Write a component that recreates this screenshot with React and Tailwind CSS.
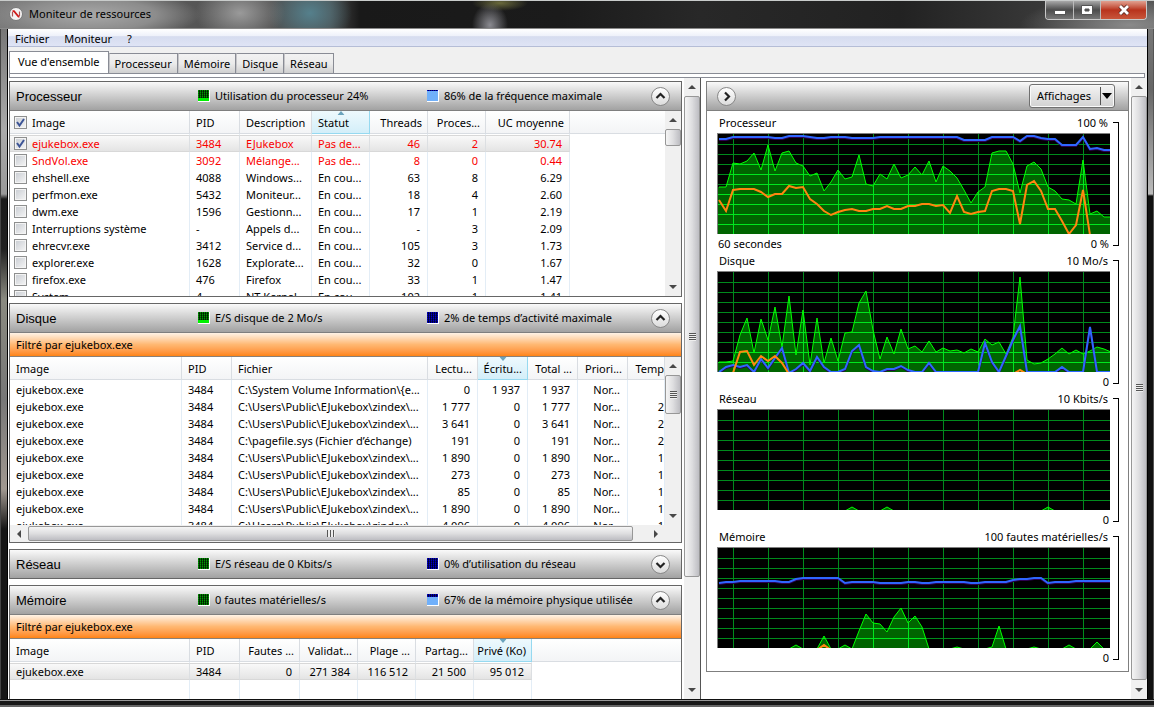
import React from 'react';

const STEP = 7;

const CHARTS = [
  {
    title: 'Processeur', max: '100 %', start: '60 secondes', min: '0 %',
    area: [53,53,29,30,27,19,36,11,37,19,17,29,32,42,39,57,48,36,45,43,21,50,52,40,45,30,44,41,33,41,27,48,32,37,44,56,69,58,53,19,17,17,30,59,32,28,35,53,57,65,66,70,26,80,77,83,83],
    orange: [66,77,56,55,55,55,58,63,60,60,52,54,53,65,70,77,81,78,76,75,77,77,75,75,72,75,75,72,72,70,70,72,71,79,62,78,80,78,77,57,55,55,57,90,51,47,57,75,75,87,100,91,56,101,101,101,101],
    blue: [5,5,3,3,3,3,3,3,4,4,2,2,2,3,4,4,3,3,3,4,4,4,4,3,3,3,3,3,3,3,3,3,3,3,3,6,6,6,6,3,3,3,3,7,2,2,4,5,5,11,11,11,3,15,14,16,16],
  },
  {
    title: 'Disque', max: '10 Mo/s', start: '', min: '0',
    area: [90,90,89,63,46,81,47,68,35,75,24,83,38,93,46,91,66,89,61,60,31,19,58,87,65,82,57,77,74,80,69,80,76,79,78,81,77,80,67,73,70,82,65,5,88,92,91,87,82,76,82,78,82,79,75,77,80],
    orange: [102,102,101,80,79,93,84,89,84,91,102,102,102,102,102,102,102,102,102,102,102,102,102,102,102,102,102,102,102,102,102,102,102,102,102,102,102,102,102,102,102,102,102,98,102,102,102,102,102,102,102,102,102,102,102,102,102],
    blue: [100,95,93,95,93,100,87,96,86,76,101,97,91,99,85,95,100,100,97,79,73,95,99,100,97,97,94,98,100,100,91,100,100,100,100,100,100,100,71,90,100,84,68,54,100,100,100,100,100,95,100,100,100,55,100,100,100],
  },
  {
    title: 'Réseau', max: '10 Kbits/s', start: '', min: '0',
    area: Array.from({ length: 57 }, (_, i) => ([19, 24, 47].includes(i) ? 97 : 101)),
  },
  {
    title: 'Mémoire', max: '100 fautes matérielles/s', start: '', min: '0',
    area: [101,101,101,101,101,101,101,101,101,101,101,97,101,101,101,88,101,101,97,101,83,66,75,76,84,69,60,75,68,79,101,101,101,101,99,101,101,101,101,99,78,101,101,101,101,99,101,101,101,101,97,101,101,101,94,101,101],
    orange: Array.from({ length: 57 }, (_, i) => (i === 15 ? 97 : 102)),
    blue: [35,34,34,33,33,33,33,33,33,34,34,31,30,30,30,30,30,30,35,34,34,34,34,35,35,35,35,34,34,35,35,34,34,34,34,34,35,35,34,34,34,34,32,31,31,30,30,35,34,34,34,33,33,33,33,33,33],
  },
];

const toPoints = (values) => values.map((y, i) => `${1 + i * STEP},${y}`).join(' ');

function Grid({ color }) {
  const rows = [10, 20, 30, 40, 50, 60, 70, 80, 90];
  const cols = [15, 50, 85, 120, 155, 190, 225, 260, 295, 330, 365];
  return (
    <g stroke={color} strokeWidth="1">
      {rows.map((y) => <line key={y} x1="0" x2="392" y1={y + 0.5} y2={y + 0.5} />)}
      {cols.map((x) => <line key={x} y1="0" y2="100" x1={x + 0.5} x2={x + 0.5} />)}
    </g>
  );
}

function Chart({ chart }) {
  const id = `area-${chart.title}`;
  const area = `0,101 0,${chart.area[0]} ${toPoints(chart.area)} 393,101`;
  return (
    <div className="flex gap-[3px]">
      <div className="min-w-0 flex-1">
        <div className="flex h-[18px] justify-between px-[2px] leading-4">
          <span>{chart.title}</span>
          <span>{chart.max}</span>
        </div>
        <div className="border-t border-l border-[#7f7f7f] bg-black">
          <svg className="block h-[100px] w-full" viewBox="0 0 392 100" preserveAspectRatio="none" role="img" aria-label={chart.title}>
            <defs>
              <clipPath id={id}><polygon points={area} /></clipPath>
            </defs>
            <rect width="392" height="100" fill="#000" />
            <Grid color="#008a1c" />
            <polygon points={area} fill="#006400" />
            <g clipPath={`url(#${id})`}><Grid color="#00e61e" /></g>
            <polyline points={toPoints(chart.area)} fill="none" stroke="#00ff00" />
            {chart.blue && <polyline points={toPoints(chart.blue)} transform="translate(0 1)" fill="none" stroke="#2c0050" strokeWidth="2" />}
            {chart.blue && <polyline points={toPoints(chart.blue)} fill="none" stroke="#2f66ff" strokeWidth="2" />}
            {chart.orange && <polyline points={toPoints(chart.orange)} fill="none" stroke="#ff8610" strokeWidth="2" />}
          </svg>
        </div>
        <div className="flex h-[19px] justify-between px-px leading-[19px]">
          <span>{chart.start}</span>
          <span>{chart.min}</span>
        </div>
      </div>
      <div className="mt-[7px] mb-[7px] w-[6px] border-y border-r border-black" />
    </div>
  );
}

function Arrow({ dir }) {
  const d = { up: 'M0 4 4 0 8 4Z', down: 'M0 0h8L4 4Z', left: 'M4 0v8L0 4Z', right: 'M0 0v8l4-4Z' }[dir];
  const wide = dir === 'up' || dir === 'down';
  return (
    <svg width={wide ? 8 : 4} height={wide ? 4 : 8} aria-hidden="true"><path d={d} fill="#484848" /></svg>
  );
}

const VERTICAL_THUMB = 'flex items-center justify-center rounded-[2px] border border-[#979797] bg-linear-to-r from-[#f5f5f5] via-[#dedee0] to-[#bdbdc2]';

function VScroll({ thumb, rest, grip = true, className = '' }) {
  return (
    <div className={`flex w-4 shrink-0 flex-col bg-[#f0f0f0] ${className}`}>
      <button aria-label="Défiler vers le haut" className="flex h-[18px] shrink-0 items-center justify-center"><Arrow dir="up" /></button>
      <div className={VERTICAL_THUMB} style={{ flex: `${thumb} 1 0px` }}>
        {grip && (
          <div className="h-[8px] w-[7px] bg-[repeating-linear-gradient(to_bottom,#555_0px,#555_1px,#eee_1px,#eee_2px)]" />
        )}
      </div>
      <div style={{ flex: `${rest} 1 0px` }} />
      <button aria-label="Défiler vers le bas" className="flex h-[18px] shrink-0 items-center justify-center"><Arrow dir="down" /></button>
    </div>
  );
}

function HScroll() {
  return (
    <div className="flex h-[17px] bg-[#f0f0f0]">
      <button aria-label="Défiler vers la gauche" className="flex w-[18px] shrink-0 items-center justify-center"><Arrow dir="left" /></button>
      <div className="my-px flex flex-[605] items-center justify-center rounded-[2px] border border-[#979797] bg-linear-to-b from-[#f5f5f5] via-[#dedee0] to-[#bdbdc2]">
        <div className="h-[7px] w-[8px] bg-[repeating-linear-gradient(to_right,#555_0px,#555_1px,#eee_1px,#eee_3px)]" />
      </div>
      <div className="flex-[14]" />
      <button aria-label="Défiler vers la droite" className="flex w-[18px] shrink-0 items-center justify-center"><Arrow dir="right" /></button>
      <div className="w-4 shrink-0" />
    </div>
  );
}

const DOTS = 'bg-[repeating-linear-gradient(to_right,#0000_0px,#0000_1px,#000a_1px,#000a_2px),repeating-linear-gradient(to_bottom,#0000_0px,#0000_1px,#0005_1px,#0005_2px)]';

const METERS = {
  greenPart: ['bg-[#009600]', 'h-[3px] bg-[#00f000]'],
  green: ['bg-[#009600]', 'h-0'],
  blue: ['bg-[#0000c8]', 'h-0'],
  blueHigh: ['bg-[#0000c8]', 'h-[10px] bg-[#70b0fa]'],
  bluePart: ['bg-[#0000c8]', 'h-[8px] bg-[#70b0fa]'],
};

function Meter({ kind, label }) {
  const [base, fill] = METERS[kind];
  return (
    <span className="flex min-w-0 items-center gap-[5px] whitespace-nowrap">
      <span className={`flex size-3 shrink-0 flex-col border-r border-b border-white ${base}`}>
        <span className={`block flex-1 ${DOTS}`} />
        <span className={`block ${fill}`} />
      </span>
      <span>{label}</span>
    </span>
  );
}

function RoundButton({ dir, label }) {
  const d = { up: 'M5.5 11 9.5 7l4 4', down: 'M5.5 8 9.5 12l4-4', right: 'M8 5.5l4 4-4 4' }[dir];
  return (
    <button aria-label={label} className="flex size-[19px] items-center justify-center rounded-full border border-[#888] bg-linear-to-b from-white to-[#dcdcdc]">
      <svg className="shrink-0" width="19" height="19" aria-hidden="true"><path d={d} fill="none" stroke="#222" strokeWidth="2.2" /></svg>
    </button>
  );
}

const BAR = 'h-[29px] border-b border-[#7f7f7f] bg-linear-to-b from-[#fafafa] to-[#a2a2a2]';

function Panel({ title, first, second, open = true, filter, className = '', children }) {
  return (
    <section className={`border border-[#666] bg-white ${className}`}>
      <header className={`grid grid-cols-[182px_229px_1fr_auto] items-center pr-[11px] pl-[6px] ${open ? BAR : 'h-[28px] bg-linear-to-b from-[#fafafa] to-[#a2a2a2]'}`}>
        <h2 className="pt-[2px] font-['Liberation_Sans',sans-serif] text-[13px]">{title}</h2>
        <Meter kind={first[0]} label={first[1]} />
        <Meter kind={second[0]} label={second[1]} />
        <RoundButton dir={open ? 'up' : 'down'} label={open ? `Réduire ${title}` : `Développer ${title}`} />
      </header>
      {filter && (
        <div className="h-6 border-b border-[#8a8078] bg-linear-to-b from-[#fff3e6] via-[#ffb872] to-[#ff8410] px-[6px] leading-[23px]">{filter}</div>
      )}
      {children}
    </section>
  );
}

function Check({ checked, label }) {
  return (
    <span className="relative mr-[5px] ml-1 inline-block size-[13px] align-[-2px]">
      <input
        type="checkbox"
        aria-label={label}
        defaultChecked={checked}
        className="peer block size-[13px] appearance-none border border-[#8e8f8f] bg-linear-to-br from-[#c8ccd2] to-[#f6f6f6] shadow-[inset_0_0_0_1px_#f4f4f4]"
      />
      <svg className="pointer-events-none absolute inset-0 hidden peer-checked:block" width="13" height="13" aria-hidden="true">
        <path d="M3 6l2.500 3.500L10 3" fill="none" stroke="#3c5496" strokeWidth="2" />
      </svg>
    </span>
  );
}

function DataTable({ label, columns, rows, sorted, checks, selected }) {
  const line = 'border-r border-[#e3edf6]';
  return (
    <table aria-label={label} className="w-full table-fixed border-separate border-spacing-0">
      <colgroup>
        {columns.map((c) => <col key={c.name} className={c.width} />)}
        <col />
      </colgroup>
      <thead>
        <tr>
          {columns.map((c, i) => (
            <th
              key={c.name}
              scope="col"
              className={`relative h-[23px] overflow-hidden whitespace-nowrap border-r border-b p-0 pt-[2px] font-normal ${c.right ? 'text-right' : 'text-left'} ${c.name === sorted?.name ? 'border-[#96d9f0] bg-linear-to-b from-[#eef9fd] to-[#d3eef9]' : 'border-[#d9dde2] bg-linear-to-b from-white to-[#f3f4f6]'}`}
            >
              {checks && i === 0 && <Check checked label="Tout sélectionner" />}
              <span className={checks && i === 0 ? '' : c.tight ? '' : c.right ? 'pr-[5px]' : 'pl-[6px]'}>{c.name}</span>
              {c.name === sorted?.name && (
                <svg className="absolute top-0 left-1/2 -translate-x-1/2" width="7" height="4" aria-hidden="true">
                  <path d={sorted.up ? 'M0 4 3.500 0 7 4Z' : 'M0 0h7L3.500 4Z'} fill="#6ba4bd" />
                </svg>
              )}
            </th>
          ))}
          <td className="border-b border-[#d9dde2] bg-linear-to-b from-white to-[#f3f4f6] p-0" />
        </tr>
      </thead>
      <tbody>
        <tr aria-hidden="true">
          {columns.map((c) => <td key={c.name} className={`h-px p-0 ${line}`} />)}
          <td className="p-0" />
        </tr>
        {rows.map((row, r) => (
          <tr key={r} className={row.red ? 'text-[#fa0000]' : ''}>
            {row.cells.map((cell, i) => (
              <td
                key={i}
                className={`h-[17px] overflow-hidden whitespace-nowrap p-0 leading-4 ${columns[i].right ? 'text-right' : ''} ${r === selected ? 'border-y border-y-[#d8d8d8] border-r border-r-[#dcdfe2] bg-linear-to-b from-[#f9f9f9] to-[#e4e4e4] leading-[15px]' : line}`}
              >
                {checks && i === 0 && <Check checked={row.checked} label={cell} />}
                <span className={checks && i === 0 ? '' : columns[i].right ? columns[i].tight ? 'pr-0' : 'pr-[7px]' : 'pl-[6px]'}>{cell}</span>
              </td>
            ))}
            <td className="p-0" />
          </tr>
        ))}
        <tr aria-hidden="true">
          {columns.map((c) => <td key={c.name} className={`h-8 p-0 ${line}`} />)}
          <td className="p-0" />
        </tr>
      </tbody>
    </table>
  );
}

const CPU_COLUMNS = [
  { name: 'Image', width: 'w-[180px]' },
  { name: 'PID', width: 'w-[50px]' },
  { name: 'Description', width: 'w-[72px]' },
  { name: 'Statut', width: 'w-[58px]' },
  { name: 'Threads', width: 'w-[58px]', right: true },
  { name: 'Proces...', width: 'w-[58px]', right: true },
  { name: 'UC moyenne', width: 'w-[84px]', right: true },
];

const CPU_ROWS = [
  { red: true, checked: true, cells: ['ejukebox.exe', '3484', 'EJukebox', 'Pas de...', '46', '2', '30.74'] },
  { red: true, cells: ['SndVol.exe', '3092', 'Mélange...', 'Pas de...', '8', '0', '0.44'] },
  { cells: ['ehshell.exe', '4088', 'Windows...', 'En cou...', '63', '8', '6.29'] },
  { cells: ['perfmon.exe', '5432', 'Moniteur...', 'En cou...', '18', '4', '2.60'] },
  { cells: ['dwm.exe', '1596', 'Gestionn...', 'En cou...', '17', '1', '2.19'] },
  { cells: ['Interruptions système', '-', 'Appels d...', 'En cou...', '-', '3', '2.09'] },
  { cells: ['ehrecvr.exe', '3412', 'Service d...', 'En cou...', '105', '3', '1.73'] },
  { cells: ['explorer.exe', '1628', 'Explorate...', 'En cou...', '32', '0', '1.67'] },
  { cells: ['firefox.exe', '476', 'Firefox', 'En cou...', '33', '1', '1.47'] },
  { cells: ['System', '4', 'NT Kernel...', 'En cou...', '102', '1', '1.41'] },
];

const DISK_COLUMNS = [
  { name: 'Image', width: 'w-[172px]' },
  { name: 'PID', width: 'w-[50px]' },
  { name: 'Fichier', width: 'w-[196px]' },
  { name: 'Lectu...', width: 'w-[50px]', right: true },
  { name: 'Écritu...', width: 'w-[50px]', right: true },
  { name: 'Total ...', width: 'w-[50px]', right: true },
  { name: 'Priori...', width: 'w-[50px]', right: true },
  { name: 'Temp', width: 'w-[37px]', right: true, tight: true },
];

const INDEX = 'C:\\Users\\Public\\EJukebox\\zindex\\...';
const DISK_ROWS = [
  ['C:\\System Volume Information\\{e...', '0', '1 937', '1 937', ''],
  [INDEX, '1 777', '0', '1 777', '2'],
  [INDEX, '3 641', '0', '3 641', '2'],
  ['C:\\pagefile.sys (Fichier d\u2019échange)', '191', '0', '191', '2'],
  [INDEX, '1 890', '0', '1 890', '1'],
  [INDEX, '273', '0', '273', '1'],
  [INDEX, '85', '0', '85', '1'],
  [INDEX, '1 890', '0', '1 890', '1'],
  [INDEX, '4 096', '0', '4 096', '1'],
].map(([file, read, write, total, time]) => ({
  cells: ['ejukebox.exe', '3484', file, read, write, total, 'Nor...', time],
}));

const MEMORY_COLUMNS = [
  { name: 'Image', width: 'w-[180px]' },
  { name: 'PID', width: 'w-[50px]' },
  { name: 'Fautes ...', width: 'w-[60px]', right: true },
  { name: 'Validat...', width: 'w-[58px]', right: true },
  { name: 'Plage ...', width: 'w-[58px]', right: true },
  { name: 'Partag...', width: 'w-[58px]', right: true },
  { name: 'Privé (Ko)', width: 'w-[58px]', right: true },
];

const MEMORY_ROWS = [
  { cells: ['ejukebox.exe', '3484', '0', '271 384', '116 512', '21 500', '95 012'] },
];

const TABS = ['Processeur', 'Mémoire', 'Disque', 'Réseau'];

function TitleBar() {
  return (
    <div className="flex h-[28px] shrink-0 items-start justify-between border-b border-[#8a8a8a] bg-[radial-gradient(ellipse_110px_26px_at_90px_14px,#a8a8a8_0%,#8c8c8c_60%,transparent_100%),radial-gradient(ellipse_45px_30px_at_240px_12px,#9a9a9a,transparent),radial-gradient(ellipse_42px_34px_at_310px_12px,#55808c,transparent),radial-gradient(ellipse_18px_22px_at_490px_24px,#8a8a90,transparent),radial-gradient(ellipse_28px_8px_at_500px_2px,#6a6a3c,transparent),radial-gradient(ellipse_110px_30px_at_1130px_24px,#8a8a8a,transparent),linear-gradient(to_right,#777_0px,#555_200px,#4a4a4a_330px,#191919_360px,#1b1b1b_560px,#282828_700px,#222_900px,#4a4a4a_100%)]">
      <div className="flex h-[26px] items-center gap-[6px] pl-[9px]">
        <svg width="14" height="14" viewBox="0 0 14 14" aria-hidden="true">
          <circle cx="7" cy="7" r="6.500" fill="#f4f4f4" stroke="#777" />
          <path d="M3.500 9.500V5M10.500 9V4.500" stroke="#a55" strokeWidth="1.200" />
          <path d="M3.500 4.200h1.500l4.500 5.300h1" fill="none" stroke="#d11b1b" strokeWidth="1.800" />
        </svg>
        <h1>Moniteur de ressources</h1>
      </div>
      <div className="mr-[7px] flex h-[19px] overflow-hidden rounded-b-[4px] border border-t-0 border-[#c8c8c8]">
        <button aria-label="Réduire" className="flex w-[28px] items-center justify-center border-r border-[#bbb] bg-linear-to-b from-[#a9a9a9] via-[#4c4c4c] via-50% to-[#777]">
          <svg width="12" height="12" aria-hidden="true"><rect x="0.500" y="6.500" width="11" height="4" fill="#fff" stroke="#555" /></svg>
        </button>
        <button aria-label="Agrandir" className="flex w-[27px] items-center justify-center border-r border-[#bbb] bg-linear-to-b from-[#a9a9a9] via-[#4c4c4c] via-50% to-[#777]">
          <svg width="12" height="10" aria-hidden="true"><path d="M.5.5h11v9H.5zM4 4v2h4V4z" fill="#fff" fillRule="evenodd" stroke="#555" /></svg>
        </button>
        <button aria-label="Fermer" className="flex w-[45px] items-center justify-center bg-linear-to-b from-[#e0a090] via-[#b8321c] via-50% to-[#c8553a]">
          <svg width="14" height="12" viewBox="0 0 14 12" aria-hidden="true">
            <path d="M3 2l8 8M11 2l-8 8" stroke="#5a2a22" strokeWidth="4.500" />
            <path d="M3 2l8 8M11 2l-8 8" stroke="#fff" strokeWidth="2.800" />
          </svg>
        </button>
      </div>
    </div>
  );
}

export default function App() {
  return (
    <div className="flex h-screen flex-col overflow-hidden border-t border-t-[#c9cccb] bg-black font-['Noto_Sans','Open_Sans',sans-serif] text-[11px] text-black">
      <TitleBar />
      <div className="flex min-h-0 flex-1">
        <div className="w-[8px] shrink-0 border-x border-l-[#444] border-r-black bg-[linear-gradient(to_bottom,#777_0px,#aaa_100px,#999_165px,#1c1c1c_170px,#222_220px,#8a8a80_270px,#777_370px,#a09890_460px,#161616_500px)]" />
        <div className="flex min-w-0 flex-1 flex-col bg-white">
          <nav className="flex h-[18px] shrink-0 items-center gap-[15px] border-b border-[#b5bdd6] bg-[linear-gradient(to_bottom,#fff_0%,#eef1fa_40%,#d6dcef_45%,#dfe4f5_100%)] px-[7px] pt-[3px]">
            <button>Fichier</button>
            <button>Moniteur</button>
            <button>?</button>
          </nav>
          <div className="shrink-0 bg-[#f0f0f0] pt-1">
            <div role="tablist" className="flex items-end pl-px">
              <button role="tab" aria-selected="true" className="h-[22px] border border-b-0 border-[#898c95] bg-white px-2 whitespace-nowrap">Vue d&apos;ensemble</button>
              {TABS.map((tab) => (
                <button key={tab} role="tab" aria-selected="false" className="h-[20px] border border-b-0 border-l-[#c5c5c8] border-[#898c95] bg-linear-to-b from-[#f2f2f2] via-[#ebebeb] to-[#d0d0d0] px-[5px] pt-px">{tab}</button>
              ))}
            </div>
            <div className="mr-[2px] ml-px h-[5px] border border-[#898c95] bg-white" />
          </div>

          <div className="grid min-h-0 flex-1 grid-cols-[693fr_446fr]">
            <div className="flex min-h-0 min-w-0 border-r border-[#555] pl-px">
              <div className="mr-[2px] flex min-w-0 flex-1 flex-col gap-[6px] overflow-hidden pt-[3px]">
                <Panel
                  title="Processeur"
                  first={['greenPart', 'Utilisation du processeur 24%']}
                  second={['blueHigh', '86% de la fréquence maximale']}
                  className="shrink-0"
                >
                  <div className="flex h-[185px]">
                    <div className="min-w-0 flex-1 overflow-hidden">
                      <DataTable label="Processeur" columns={CPU_COLUMNS} rows={CPU_ROWS} sorted={{ name: 'Statut', up: true }} checks selected={0} />
                    </div>
                    <VScroll thumb={15} rest={134} grip={false} />
                  </div>
                </Panel>
                <Panel
                  title="Disque"
                  first={['greenPart', 'E/S disque de 2 Mo/s']}
                  second={['blue', '2% de temps d\u2019activité maximale']}
                  filter="Filtré par ejukebox.exe"
                  className="shrink-0"
                >
                  <div className="flex h-[168px]">
                    <div className="min-w-0 flex-1 overflow-hidden">
                      <DataTable label="Disque" columns={DISK_COLUMNS} rows={DISK_ROWS} sorted={{ name: 'Écritu...' }} />
                    </div>
                    <VScroll thumb={38} rest={94} />
                  </div>
                  <HScroll />
                </Panel>
                <Panel
                  title="Réseau"
                  open={false}
                  first={['green', 'E/S réseau de 0 Kbits/s']}
                  second={['blue', '0% d\u2019utilisation du réseau']}
                  className="shrink-0"
                />
                <Panel
                  title="Mémoire"
                  first={['green', '0 fautes matérielles/s']}
                  second={['bluePart', '67% de la mémoire physique utilisée']}
                  filter="Filtré par ejukebox.exe"
                  className="min-h-0 flex-1 overflow-hidden border-b-0"
                >
                  <DataTable label="Mémoire" columns={MEMORY_COLUMNS} rows={MEMORY_ROWS} sorted={{ name: 'Privé (Ko)' }} selected={0} />
                </Panel>
              </div>
              <VScroll thumb={481} rest={104} />
            </div>

            <div className="flex min-h-0 min-w-0 pl-[5px]">
              <div className="mr-[2px] min-w-0 flex-1 overflow-hidden pt-[3px]">
                <section className="border border-[#7f7f7f] bg-white">
                  <header className={`flex items-center justify-between pr-[13px] pl-[10px] ${BAR}`}>
                    <RoundButton dir="right" label="Masquer les graphiques" />
                    <button className="flex h-[24px] items-center rounded-[3px] border border-[#707070] bg-linear-to-b from-[#f4f4f4] to-[#d2d2d2] pr-[2px] pl-[7px] shadow-[inset_0_0_0_1px_#fafafa]">
                      <span>Affichages</span>
                      <span className="mr-px ml-[9px] h-[18px] w-px bg-[#555]" />
                      <svg width="10" height="6" aria-hidden="true"><path d="M0 0h10L5 6Z" fill="#000" /></svg>
                    </button>
                  </header>
                  <div className="pt-1 pr-[9px] pb-[4px] pl-[10px]">
                    {CHARTS.map((chart) => <Chart key={chart.title} chart={chart} />)}
                  </div>
                </section>
              </div>
              <VScroll thumb={584} rest={1} />
            </div>
          </div>
        </div>
        <div className="w-[7px] shrink-0 border-x border-l-black border-r-[#555] bg-[linear-gradient(to_bottom,#777_0px,#666_60px,#bbb_165px,#111_167px)]" />
      </div>
      <div className="h-[8px] shrink-0 border-t border-[#111] bg-[#181818] shadow-[inset_0_1px_0_#999,inset_0_-2px_0_#666]" />
    </div>
  );
}
